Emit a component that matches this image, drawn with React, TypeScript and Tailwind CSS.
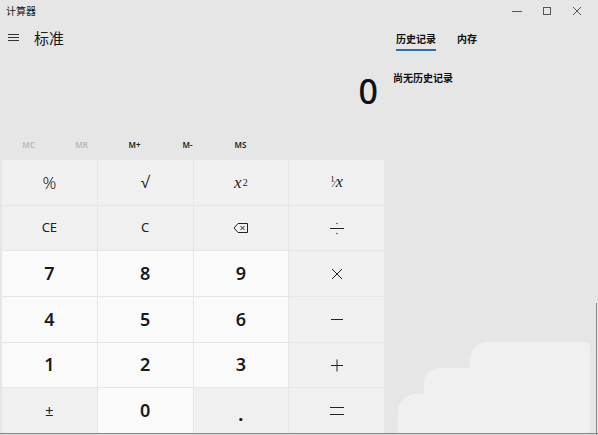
import React from "react";

const cjk = { fontFamily: '"Noto Sans CJK SC", "Noto Sans", sans-serif' };
const latin = { fontFamily: '"Noto Sans", "Open Sans", sans-serif' };
const serif = { fontFamily: '"Liberation Serif", "DejaVu Serif", serif' };

function Line({ children, w = 16, h = 16 }: { children: React.ReactNode; w?: number; h?: number }) {
  return (
    <svg width={w} height={h} viewBox={`0 0 ${w} ${h}`} fill="none" stroke="#222" strokeWidth="1">
      {children}
    </svg>
  );
}

type Cell = { key: string; node: React.ReactNode; light?: boolean };

const digit = (d: string) => (
  <span className="text-[18px] font-semibold text-[#1a1a1a]" style={latin}>
    {d}
  </span>
);

const cells: Cell[] = [
  { key: "pct", node: <span className="text-[17px] font-light text-[#222]" style={latin}>%</span> },
  { key: "sqrt", node: <span className="text-[16px] text-[#222]" style={latin}>√</span> },
  {
    key: "sq",
    node: (
      <span className="text-[17px] text-[#222] italic" style={serif}>
        x<sup className="text-[10px] not-italic relative -top-[2px] ml-[1px]">2</sup>
      </span>
    ),
  },
  {
    key: "inv",
    node: (
      <span className="text-[16px] text-[#222] flex items-baseline" style={serif}>
        <span className="text-[9px] relative -top-[5px]">1</span>
        <span className="text-[12px] -ml-[1px]">⁄</span>
        <i className="text-[16px]">x</i>
      </span>
    ),
  },
  { key: "ce", node: <span className="text-[13px] text-[#222]" style={latin}>CE</span> },
  { key: "c", node: <span className="text-[13px] text-[#222]" style={latin}>C</span> },
  {
    key: "bs",
    node: (
      <Line w={16} h={12}>
        <path d="M5 1.5 H14.5 V10.5 H5 L1 6 Z" />
        <path d="M7.5 4 L11.5 8 M11.5 4 L7.5 8" />
      </Line>
    ),
  },
  {
    key: "div",
    node: (
      <Line w={16} h={14}>
        <path d="M1 7.5 H15" />
        <circle cx="8" cy="2.5" r="0.7" fill="#222" stroke="none" />
        <circle cx="8" cy="12.5" r="0.7" fill="#222" stroke="none" />
      </Line>
    ),
  },
  { key: "7", node: digit("7"), light: true },
  { key: "8", node: digit("8"), light: true },
  { key: "9", node: digit("9"), light: true },
  {
    key: "mul",
    node: (
      <Line w={14} h={14}>
        <path d="M2 2 L12 12 M12 2 L2 12" />
      </Line>
    ),
  },
  { key: "4", node: digit("4"), light: true },
  { key: "5", node: digit("5"), light: true },
  { key: "6", node: digit("6"), light: true },
  {
    key: "sub",
    node: (
      <Line w={14} h={4}>
        <path d="M1 2.5 H13" />
      </Line>
    ),
  },
  { key: "1", node: digit("1"), light: true },
  { key: "2", node: digit("2"), light: true },
  { key: "3", node: digit("3"), light: true },
  {
    key: "add",
    node: (
      <Line w={14} h={14}>
        <path d="M1 7.5 H13 M7 1.5 V13.5" />
      </Line>
    ),
  },
  { key: "pm", node: <span className="text-[15px] text-[#222]" style={latin}>±</span> },
  { key: "0", node: digit("0"), light: true },
  {
    key: "dot",
    node: <span className="text-[18px] font-bold text-[#1a1a1a] relative top-[4px]" style={latin}>.</span>,
  },
  {
    key: "eq",
    node: (
      <Line w={16} h={10}>
        <path d="M1 1.5 H15 M1 8.5 H15" />
      </Line>
    ),
  },
];

export default function App() {
  return (
    <div className="relative w-[598px] h-[435px] bg-[#e6e6e6] overflow-hidden flex flex-col" style={cjk}>
      {/* title bar */}
      <div className="h-[22px] flex items-center pl-[6px] shrink-0">
        <span className="text-[10px] text-[#222] leading-none">计算器</span>
        <div className="ml-auto flex items-center h-full">
          <div className="w-[30px] flex justify-center">
            <div className="w-[10px] h-px bg-[#555]" />
          </div>
          <div className="w-[30px] flex justify-center">
            <div className="w-[8px] h-[8px] border border-[#555]" />
          </div>
          <div className="w-[30px] flex justify-center">
            <svg width="10" height="10" viewBox="0 0 10 10" stroke="#555" strokeWidth="1">
              <path d="M1 1 L9 9 M9 1 L1 9" />
            </svg>
          </div>
          <div className="w-[6px]" />
        </div>
      </div>

      <div className="flex flex-1 min-h-0">
        {/* left */}
        <div className="w-[386px] flex flex-col">
          <div className="h-[30px] flex items-center pl-[8px]">
            <div className="flex flex-col gap-[2px] w-[11px]">
              <div className="h-px bg-[#333]" />
              <div className="h-px bg-[#333]" />
              <div className="h-px bg-[#333]" />
            </div>
            <span className="ml-[15px] text-[15px] text-[#1a1a1a] leading-none">标准</span>
          </div>
          <div className="h-[78px] flex items-center justify-end pr-[8px]">
            <span className="text-[34px] font-medium text-[#111] leading-none" style={latin}>
              0
            </span>
          </div>
          <div className="h-[30px] flex items-center pl-[2px]" style={latin}>
            {["MC", "MR", "M+", "M-", "MS"].map((m, i) => (
              <div
                key={m}
                className={`w-[53px] text-center text-[8px] font-semibold ${i < 2 ? "text-[#b8b8b8]" : "text-[#1a1a1a]"}`}
              >
                {m}
              </div>
            ))}
          </div>
          <div className="ml-[2px] w-[382px] h-[273px] grid grid-cols-4 grid-rows-6 gap-px">
            {cells.map((c) => (
              <div
                key={c.key}
                className={`flex items-center justify-center ${c.light ? "bg-[#fafafa]" : "bg-[#f0f0f0]"}`}
              >
                {c.node}
              </div>
            ))}
          </div>
        </div>

        {/* right */}
        <div className="flex-1 pl-[7px] pt-[11px] flex flex-col">
          <div className="flex ml-[3px] gap-[21px]">
            <div className="flex flex-col">
              <span className="text-[10px] font-bold leading-[12px] text-[#111]">历史记录</span>
              <div className="mt-[4px] h-[2px] bg-[#2a6fb0]" />
            </div>
            <span className="text-[10px] font-bold leading-[12px] text-[#111]">内存</span>
          </div>
          <span className="mt-[21px] text-[10px] font-bold leading-[12px] text-[#111]">尚无历史记录</span>
        </div>
      </div>

      <div className="h-px bg-[#8a8a8a] shrink-0" />
      <div className="h-px bg-[#d8d8d8] shrink-0" />

      {/* watermark-like light patches */}
      <div className="absolute left-[470px] top-[342px] w-[120px] h-[91px] bg-[#f0f0f0] rounded-tl-[18px] rounded-tr-[6px]" />
      <div className="absolute left-[424px] top-[368px] w-[60px] h-[65px] bg-[#f0f0f0] rounded-tl-[14px]" />
      <div className="absolute left-[398px] top-[394px] w-[40px] h-[39px] bg-[#f0f0f0] rounded-tl-[18px]" />
      <div className="absolute right-[1px] top-[303px] bottom-0 w-px bg-[#8a8a8a]" />
    </div>
  );
}
